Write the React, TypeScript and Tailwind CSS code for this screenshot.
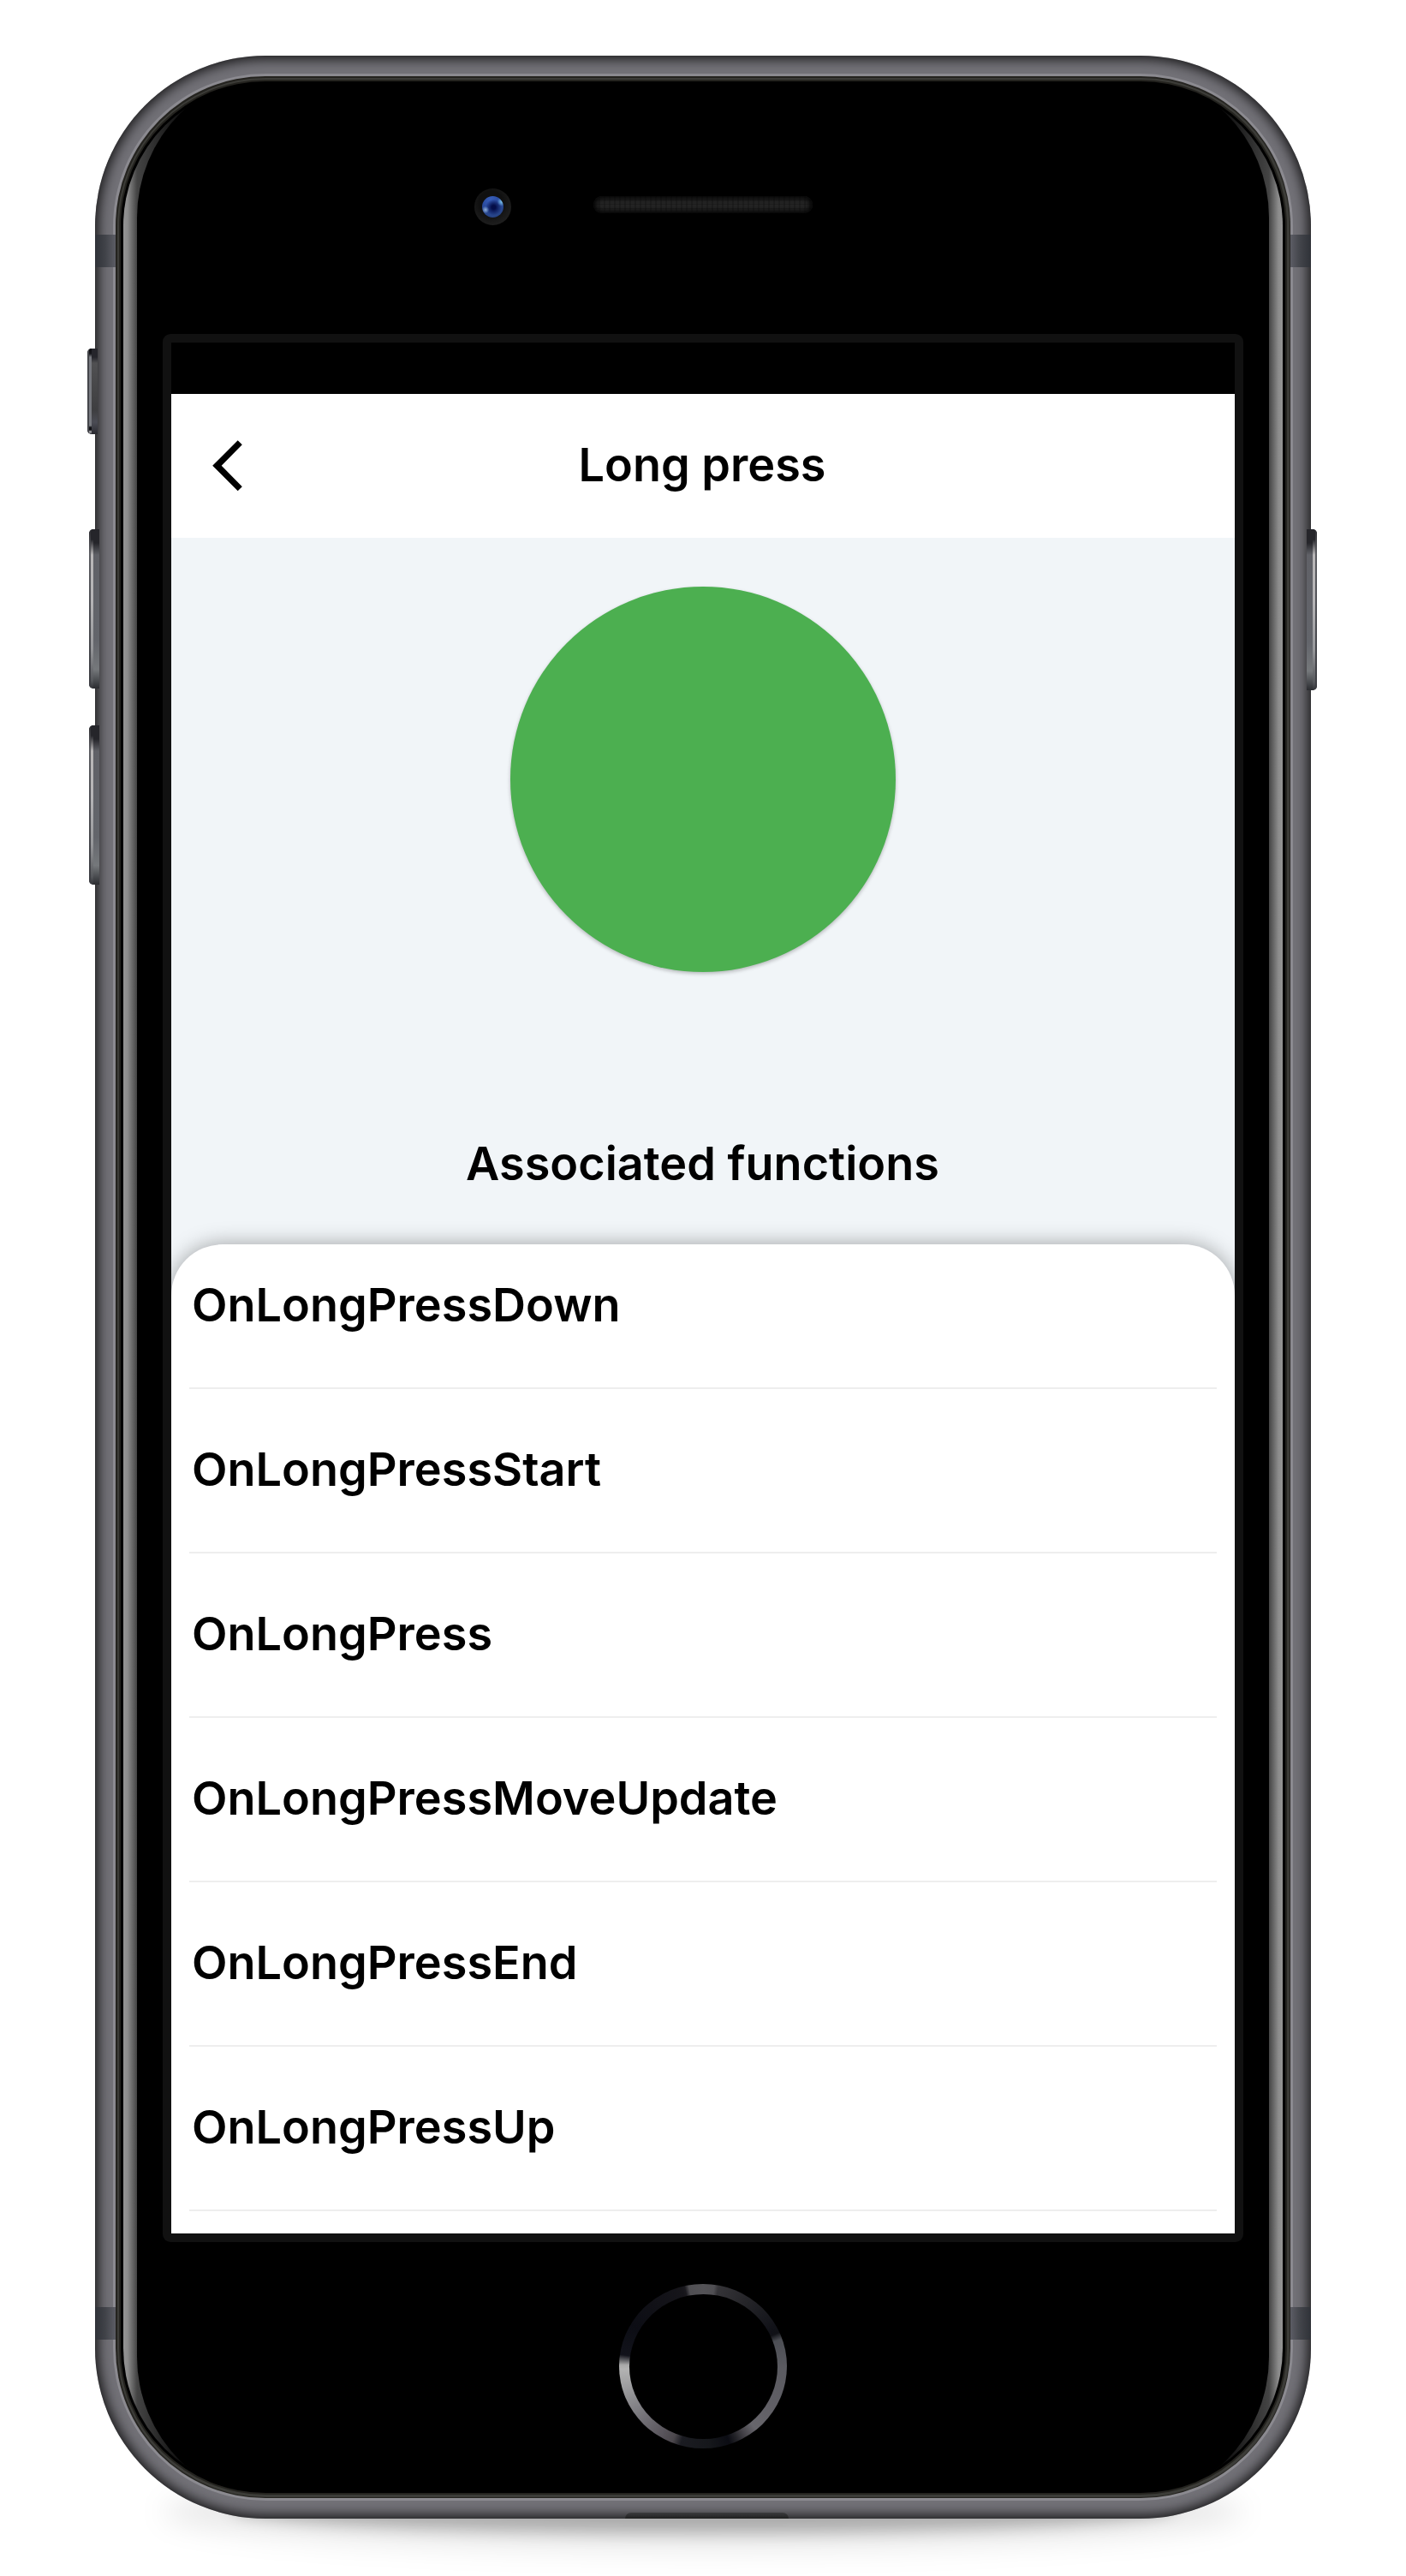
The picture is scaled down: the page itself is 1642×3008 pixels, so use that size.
import React from "react";

const FUNCTIONS = [
  "OnLongPressDown",
  "OnLongPressStart",
  "OnLongPress",
  "OnLongPressMoveUpdate",
  "OnLongPressEnd",
  "OnLongPressUp",
];

function AntennaBand({ className }: { className: string }) {
  return <div className={"absolute h-[38px] w-6 from-[#2f3238] via-[#414349] to-[#5c5d65] " + className} />;
}

function SideButton({ className, flip = false }: { className: string; flip?: boolean }) {
  return (
    <div
      className={
        "absolute flex w-3 overflow-hidden bg-[#3c3d42] " +
        (flip ? "flex-row-reverse rounded-r-[5px] " : "rounded-l-[5px] ") +
        className
      }
    >
      <div className="h-full w-0.5 bg-linear-to-b from-[#2c2c30] via-[#5c5d62] via-15% to-[#3c3d42]" />
      <div className="h-full w-[3px] bg-[linear-gradient(to_bottom,#25252a_0,#25252a_12px,#b9b7b8_30px,#b5b4b6_45%,#96979a_75%,#55575b_95%,#303136_100%)]" />
      <div className="h-full grow bg-[linear-gradient(to_bottom,#25252a_0,#25252a_16px,#606167_30px,#63656b_70%,#75787b_88%,#3d3f43_97%,#2b2c30_100%)]" />
    </div>
  );
}

function MuteSwitch() {
  return (
    <div className="absolute top-[342px] -left-[9px] flex h-[100px] w-3 overflow-hidden rounded-l-[5px] bg-[#33343a]">
      <div className="h-full w-0.5 bg-[#45464b]" />
      <div className="h-full w-[3px] bg-[linear-gradient(to_bottom,#0c0c10_0,#15151a_6px,#77797f_10px,#77797f_90px,#101014_92px,#101014_95px,#b0b0b4_97px,#2a2a30_100%)]" />
      <div className="h-full grow bg-[linear-gradient(to_bottom,#25252b_0,#25252b_10px,#505052_17px,#3e3e40_72px,#4b4c54_86px,#2b2b31_100%)]" />
    </div>
  );
}

function Camera() {
  return (
    <div className="flex h-[43px] w-[43px] items-center justify-center rounded-full bg-[radial-gradient(circle_at_45%_40%,#101010_40%,#191919_60%,#282828_100%)]">
      <div className="h-[25px] w-[25px] rounded-full bg-[radial-gradient(circle_at_16%_64%,#8fb0da_0,#8fb0da00_16%),radial-gradient(circle_at_92%_26%,#7cc4f0_0,#7cc4f000_18%),radial-gradient(circle_at_54%_52%,#040d48_0,#040d48_12%,#06105200_50%),radial-gradient(circle_at_40%_15%,#385eba_0,#2a4b9e_40%,#253f78_100%)]" />
    </div>
  );
}

function Speaker() {
  return (
    <div className="h-5 w-64 rounded-full bg-[#242424] bg-[repeating-linear-gradient(90deg,#00000030_0_2px,transparent_2px_6px),repeating-linear-gradient(0deg,#00000030_0_1px,transparent_1px_5px)] shadow-[inset_0_0_5px_3px_#060606]" />
  );
}

function HomeButton() {
  return (
    <div className="flex h-48 w-[196px] items-center justify-center rounded-[50%] bg-[conic-gradient(#545357_0deg,#504f53_8deg,#353438_11deg,#242428_35deg,#111218_62deg,#101116_66deg,#4c4e54_71deg,#5b5b61_92deg,#605f65_120deg,#67666c_140deg,#48464c_148deg,#242429_155deg,#0b0c13_161deg,#15171b_175deg,#1b1c22_196deg,#4b474c_202deg,#57535a_210deg,#716f75_228deg,#8e8e91_246deg,#b3b3b3_268deg,#a8a8a8_271deg,#12131b_278deg,#0c0d14_300deg,#16151a_345deg,#1a191e_347deg,#504f53_350deg,#545357_360deg)]">
      <div className="h-[169px] w-[173px] rounded-[50%] bg-black" />
    </div>
  );
}

function FunctionRow({ name }: { name: string }) {
  return (
    <li className="mx-[21px] flex h-48 items-center border-b-2 border-[#eeeeee] pb-0.5 pl-[3px] text-black">
      {name}
    </li>
  );
}

function Screen() {
  return (
    <div className="flex h-[2208px] w-[1242px] flex-col overflow-hidden bg-[#f1f5f8] font-['Inter',sans-serif] text-[54px] leading-[66px] font-semibold text-black">
      <div className="h-15 shrink-0 bg-black" />
      <header className="grid h-42 shrink-0 grid-cols-[168px_1fr_168px] items-center bg-white">
        <svg className="ml-[48px] h-[60px] w-9" viewBox="0 0 36 60">
          <path d="M29.7 0.3 L34.8 5.3 L10.7 29.7 L34.8 54.2 L29.7 59.3 L0.2 29.7 Z" fill="#000" />
        </svg>
        <h1 className="-mt-0.5 pr-0.5 text-center">Long press</h1>
      </header>
      <div className="mt-[57px] h-[450px] w-[450px] shrink-0 self-center rounded-full bg-[#4caf50] shadow-[0_2px_4px_#00000040]" />
      <h2 className="mt-[191px] shrink-0 pr-px text-center">Associated functions</h2>
      <ul className="mt-[61px] h-[1155px] shrink-0 rounded-t-[60px] bg-white shadow-[0_0_24px_#00000058]">
        <div className="-mt-[23px]">
          {FUNCTIONS.map((name) => (
            <FunctionRow key={name} name={name} />
          ))}
        </div>
      </ul>
    </div>
  );
}

function Glass() {
  return (
    <div className="relative h-[2828px] w-[1372px] overflow-hidden rounded-[175px] bg-[#24231f] p-[1.5px]">
      <div className="h-full w-full rounded-[173.5px] bg-[#3c3c38] p-[2.5px]">
        <div className="h-full w-full rounded-[171px] bg-[#24231f] p-[2px]">
          <div className="h-full w-full rounded-[169px] bg-black" />
        </div>
      </div>
      <div className="absolute inset-[9px] overflow-hidden rounded-[166px] bg-[linear-gradient(90deg,#949494_0,#8c8c8c_5px,#444444_16px,#202020_50px,#000_85px,#000_calc(100%-85px),#202020_calc(100%-50px),#444444_calc(100%-16px),#8c8c8c_calc(100%-5px),#949494_100%)]">
        <div className="absolute -inset-y-4 inset-x-4 rounded-[172px] bg-black" />
      </div>
      <div className="absolute inset-[6px] flex flex-col items-center">
        <div className="grid h-[295px] w-full grid-cols-[552px_256px_1fr] pt-[125px]">
          <div className="flex pl-[413px]">
            <Camera />
          </div>
          <div className="pt-[9px]">
            <Speaker />
          </div>
        </div>
        <div className="rounded-[9px] bg-[#111111] p-[10px]">
          <Screen />
        </div>
        <div className="mt-[49px]">
          <HomeButton />
        </div>
      </div>
    </div>
  );
}

export default function App() {
  return (
    <main className="relative h-[3008px] w-[1642px] overflow-hidden bg-white px-[111px] pt-[65px]">
      <div className="absolute top-[2890px] left-[190px] h-[86px] w-[1262px] rounded-[50%] bg-[#00000018] blur-[16px]" />
      <div className="absolute top-[2900px] left-[270px] h-[58px] w-[1102px] rounded-[50%] bg-[#00000040] blur-[9px]" />
      <div className="relative h-[2876px] w-[1420px] rounded-[199px] p-6">
        <div className="absolute inset-0 rounded-[199px] bg-[#727177] shadow-[inset_0_0_14px_4px_#000000c8]" />
        <div className="absolute inset-[21px] rounded-[178px] bg-[#8b8a90]" />
        <SideButton className="top-[553px] -left-[7px] h-[186px]" />
        <SideButton className="top-[782px] -left-[7px] h-[186px]" />
        <SideButton flip className="top-[553px] -right-[7px] h-[188px]" />
        <MuteSwitch />
        <AntennaBand className="top-[209px] left-0 bg-linear-to-r" />
        <AntennaBand className="top-[209px] right-0 bg-linear-to-l" />
        <AntennaBand className="top-[2629px] left-0 bg-linear-to-r" />
        <AntennaBand className="top-[2629px] right-0 bg-linear-to-l" />
        <div className="absolute bottom-0 left-[619px] h-[7px] w-[191px] rounded-t-[7px] bg-linear-to-b from-[#3c3c3e] to-[#202020]" />
        <Glass />
      </div>
    </main>
  );
}
